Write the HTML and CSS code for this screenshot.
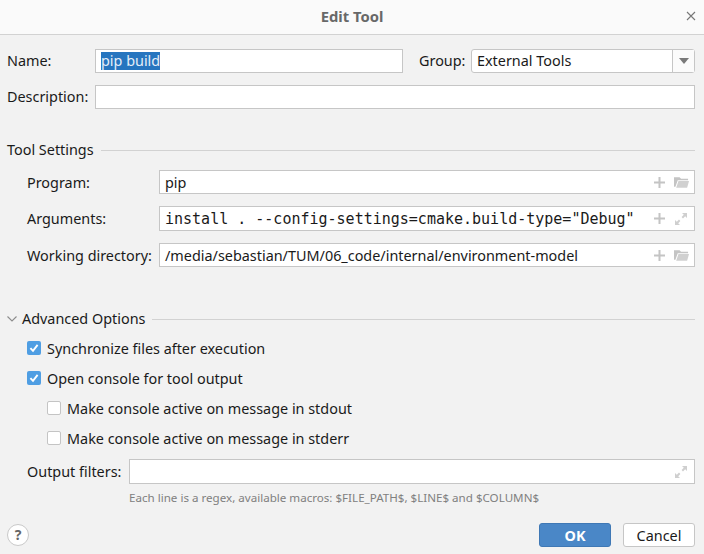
FILE: index.html
```html
<!DOCTYPE html>
<html lang="en">
<head>
  <meta charset="UTF-8" />
  <title>Edit Tool</title>
  <link rel="stylesheet" href="styles.css">
</head>
<body>
  <div class="titlebar">
    <span class="title">Edit Tool</span>
    <svg class="close" width="10" height="10" viewBox="0 0 10 10"><path d="M1 1l8 8M9 1l-8 8" stroke="#777" stroke-width="1.1" fill="none"/></svg>
  </div>

  <div class="content">
    <!-- Name / group -->
    <div class="row row-name">
      <label class="lbl lbl-top">Name:</label>
      <div class="field field-name"><span class="selected">pip build</span></div>
      <label class="lbl lbl-group">Group:</label>
      <div class="combo">
        <span class="combo-text">External Tools</span>
        <span class="combo-btn"><svg width="10" height="6" viewBox="0 0 10 6"><path d="M0 0h10L5 6z" fill="#7a7a7a"/></svg></span>
      </div>
    </div>
    <div class="row row-desc">
      <label class="lbl lbl-top">Description:</label>
      <div class="field field-grow"></div>
    </div>

    <!-- Tool settings -->
    <div class="section section-tool">
      <span class="section-title">Tool Settings</span>
      <span class="rule"></span>
    </div>
    <div class="row row-program">
      <label class="lbl lbl-setting">Program:</label>
      <div class="field field-grow">
        <span class="value">pip</span>
        <svg class="plus" width="11" height="11" viewBox="0 0 11 11"><path d="M5.5 0v11M0 5.5h11" stroke="#c4c4c4" stroke-width="2" fill="none"/></svg>
        <svg class="folder" width="15" height="12" viewBox="0 0 16 12"><path d="M0 1h6l1.5 1.5H15V4H4L1.5 11H0z" fill="#c4c4c4"/><path d="M4.8 5H16l-2 7H2.3z" fill="#d0d0d0"/></svg>
      </div>
    </div>
    <div class="row row-args">
      <label class="lbl lbl-setting">Arguments:</label>
      <div class="field field-grow">
        <span class="value mono">install . --config-settings=cmake.build-type="Debug"</span>
        <svg class="plus plus-wide" width="11" height="11" viewBox="0 0 11 11"><path d="M5.5 0v11M0 5.5h11" stroke="#c4c4c4" stroke-width="2" fill="none"/></svg>
        <svg class="expand" width="12" height="12" viewBox="0 0 12 12"><path d="M7 0h5v5L10.2 3.2 8 5.4 6.6 4 8.8 1.8zM5 12H0V7l1.8 1.8L4 6.6 5.4 8 3.2 10.2z" fill="#cfcfcf"/></svg>
      </div>
    </div>
    <div class="row row-dir">
      <label class="lbl lbl-setting">Working directory:</label>
      <div class="field field-grow">
        <span class="value">/media/sebastian/TUM/06_code/internal/environment-model</span>
        <svg class="plus" width="11" height="11" viewBox="0 0 11 11"><path d="M5.5 0v11M0 5.5h11" stroke="#c4c4c4" stroke-width="2" fill="none"/></svg>
        <svg class="folder" width="15" height="12" viewBox="0 0 16 12"><path d="M0 1h6l1.5 1.5H15V4H4L1.5 11H0z" fill="#c4c4c4"/><path d="M4.8 5H16l-2 7H2.3z" fill="#d0d0d0"/></svg>
      </div>
    </div>

    <!-- Advanced options -->
    <div class="section section-adv">
      <svg class="chevron" width="10" height="6" viewBox="0 0 10 6"><path d="M.5.5L5 5 9.5.5" stroke="#8c8c8c" stroke-width="1.1" fill="none"/></svg>
      <span class="section-title">Advanced Options</span>
      <span class="rule"></span>
    </div>
    <div class="check check-first">
      <span class="box on"><svg width="14" height="14" viewBox="0 0 14 14"><path d="M3.4 7.2l2.6 2.7 4.6-6" stroke="#fff" stroke-width="1.9" fill="none"/></svg></span>
      <span>Synchronize files after execution</span>
    </div>
    <div class="check">
      <span class="box on"><svg width="14" height="14" viewBox="0 0 14 14"><path d="M3.4 7.2l2.6 2.7 4.6-6" stroke="#fff" stroke-width="1.9" fill="none"/></svg></span>
      <span>Open console for tool output</span>
    </div>
    <div class="check check-sub">
      <span class="box"></span>
      <span>Make console active on message in stdout</span>
    </div>
    <div class="check check-sub">
      <span class="box"></span>
      <span>Make console active on message in stderr</span>
    </div>
    <div class="row row-filters">
      <label class="lbl lbl-setting">Output filters:</label>
      <div class="field field-grow field-tall">
        <svg class="expand" width="12" height="12" viewBox="0 0 12 12"><path d="M7 0h5v5L10.2 3.2 8 5.4 6.6 4 8.8 1.8zM5 12H0V7l1.8 1.8L4 6.6 5.4 8 3.2 10.2z" fill="#cfcfcf"/></svg>
      </div>
    </div>
    <div class="hint">Each line is a regex, available macros: $FILE_PATH$, $LINE$ and $COLUMN$</div>

    <div class="footer">
      <span class="help">?</span>
      <button class="btn btn-ok">OK</button>
      <button class="btn btn-cancel">Cancel</button>
    </div>
  </div>
</body>
</html>
```

FILE: styles.css
```css
html, body {
  margin: 0;
  height: 554px;
  overflow: hidden;
}
body {
  font-family: "Noto Sans", sans-serif;
  font-size: 14.4px;
  color: #1a1a1a;
  background-color: #f2f2f2;
}
.titlebar {
  height: 34px;
  background-color: #fafafa;
  border-bottom: 1px solid #d2d2d2;
  display: flex;
  align-items: center;
  justify-content: center;
  position: relative;
}
.title {
  font-weight: bold;
  font-size: 14.8px;
  color: #686868;
  margin-top: -2px;
}
.close {
  position: absolute;
  right: 8px;
  top: 11px;
}
.content {
  padding: 14px 9px 0 7px;
}
.row {
  display: flex;
  align-items: center;
}
.row-desc { margin-top: 12px; }
.row-program { margin-top: 10px; padding-left: 20px; }
.row-args { margin-top: 12px; padding-left: 20px; }
.row-dir { margin-top: 12px; padding-left: 20px; }
.row-filters { margin-top: 11px; padding-left: 20px; }
.lbl { white-space: nowrap; padding-bottom: 2px; }
.lbl-top { width: 88px; }
.lbl-group { width: 46px; margin: 0 6px 0 16px; }
.lbl-setting { width: 132px; padding-bottom: 0; }
.row-filters .lbl-setting { width: 102px; }
.field {
  height: 24px;
  box-sizing: border-box;
  border: 1px solid #c6c6c6;
  background-color: #fff;
  display: flex;
  align-items: center;
  padding: 0 5px;
  white-space: nowrap;
}
.field-name { width: 308px; }
.field-grow { flex: 1; }
.row-args .field { height: 25px; }
.field-tall { height: 25px; }
.selected {
  background-color: #2675bf;
  color: #e4eef8;
  height: 18px;
  line-height: 17px;
}
.value { flex: 1; }
.mono {
  font-family: "DejaVu Sans Mono", monospace;
  font-size: 15px;
}
.plus { margin-right: 9px; }
.plus-wide { margin-right: 10px; }
.expand { margin: 0 2px 0 auto; }
.combo {
  flex: 1;
  height: 24px;
  box-sizing: border-box;
  border: 1px solid #c6c6c6;
  border-radius: 3px;
  background-color: #fff;
  display: flex;
  align-items: center;
}
.combo-text { flex: 1; padding: 0 0 2px 5px; }
.combo-btn {
  width: 21px;
  height: 100%;
  border-left: 1px solid #c6c6c6;
  background-color: #fbfbfb;
  display: flex;
  align-items: center;
  justify-content: center;
}
.section {
  display: flex;
  align-items: center;
  height: 20px;
}
.section-tool { margin-top: 31px; }
.section-adv { margin-top: 42px; }
.section-title { white-space: nowrap; padding-bottom: 2px; }
.rule {
  flex: 1;
  height: 1px;
  background-color: #d2d2d2;
  margin-left: 7px;
}
.chevron { margin-right: 5px; }
.check {
  display: flex;
  align-items: center;
  height: 20px;
  margin-top: 10px;
  padding-left: 20px;
}
.check-first { margin-top: 9px; }
.check-sub { padding-left: 40px; }
.box {
  width: 14px;
  height: 14px;
  box-sizing: border-box;
  border: 1px solid #c4c4c4;
  border-radius: 2px;
  background-color: #fff;
  margin-right: 6px;
  display: block;
}
.box.on {
  border: none;
  background-color: #4f9ee3;
}
.box svg { display: block; }
.hint {
  font-size: 11.6px;
  color: #808080;
  margin: 6px 0 0 122px;
  height: 16px;
  line-height: 16px;
}
.footer {
  display: flex;
  align-items: center;
  margin-top: 17px;
  height: 24px;
}
.help {
  width: 22px;
  height: 22px;
  box-sizing: border-box;
  border: 1px solid #c9c9c9;
  border-radius: 50%;
  background-color: #fff;
  color: #666;
  font-weight: bold;
  font-size: 14px;
  text-align: center;
  line-height: 20px;
  margin-right: auto;
}
.btn {
  width: 72px;
  height: 24px;
  box-sizing: border-box;
  border-radius: 3px;
  font-family: "Noto Sans", sans-serif;
  font-size: 14.4px;
  padding: 0;
}
.btn-ok {
  background-color: #4a87c7;
  border: 1px solid #3f78b5;
  color: #fff;
  font-weight: bold;
}
.btn-cancel {
  margin-left: 12px;
  background-color: #fff;
  border: 1px solid #c6c6c6;
  color: #1a1a1a;
}
```
